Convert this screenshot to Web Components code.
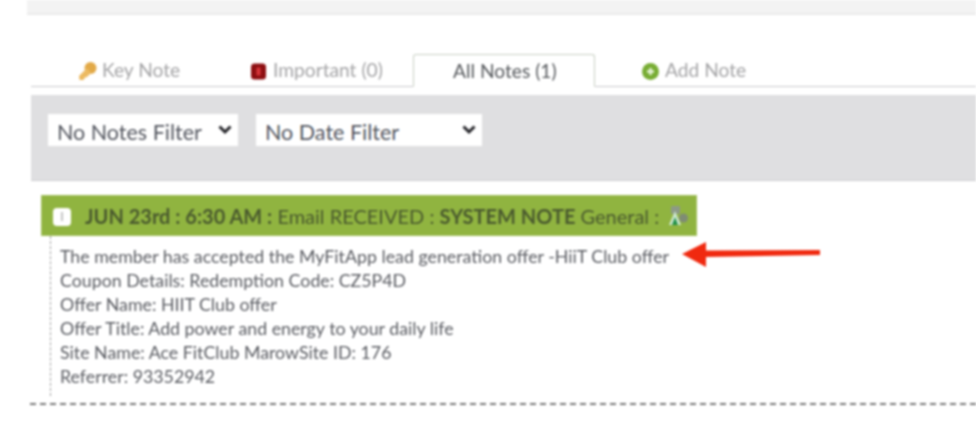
<!DOCTYPE html>
<html>
<head>
<meta charset="utf-8">
<style>
  html, body { margin: 0; padding: 0; background: #fff; height: 448px; overflow: hidden; }
  body { font-family: Lato, "Open Sans", sans-serif; }
</style>
</head>
<body>
<notes-page>
  <note-tabs></note-tabs>
  <note-filters></note-filters>
  <note-entry>
    <div>The member has accepted the MyFitApp lead generation offer -HiiT Club offer</div>
    <div>Coupon Details: Redemption Code: CZ5P4D</div>
    <div>Offer Name: HIIT Club offer</div>
    <div>Offer Title: Add power and energy to your daily life</div>
    <div>Site Name: Ace FitClub MarowSite ID: 176</div>
    <div>Referrer: 93352942</div>
  </note-entry>
</notes-page>

<script>
class NotesPage extends HTMLElement {
  connectedCallback() {
    const root = this.attachShadow({ mode: "open" });
    root.innerHTML = `
      <style>
        :host {
          display: block;
          position: relative;
          height: 448px;
          filter: blur(0.8px);
        }
        .top {
          height: 13px;
          margin-left: 27px;
          background: #f3f3f3;
          border-bottom: 2px solid #ebebeb;
        }
        .main {
          padding: 39px 0 0 31px;
        }
        .dash {
          margin-top: 7px;
          border-top: 2px dashed #777;
          margin-left: -1px;
        }
        .arrow {
          position: absolute;
          left: 681px;
          top: 240px;
        }
      </style>
      <div class="top"></div>
      <div class="main">
        <slot></slot>
        <div class="dash"></div>
      </div>
      <svg class="arrow" width="140" height="28" viewBox="0 0 140 28">
        <path d="M1 14 L25 2 L25 10.500 L139 10 L139 15 L25 17 L25 27 Z" fill="#f0290f"/>
      </svg>
    `;
  }
}

class NoteTabs extends HTMLElement {
  connectedCallback() {
    const root = this.attachShadow({ mode: "open" });
    root.innerHTML = `
      <style>
        :host {
          display: flex;
          align-items: flex-end;
          height: 32px;
          border-bottom: 1px solid #c9c9cc;
          margin-bottom: 8px;
          font-size: 19.200px;
          color: #a4a4a6;
        }
        .tab {
          display: flex;
          align-items: center;
          height: 32px;
          padding-bottom: 2px;
          box-sizing: border-box;
        }
        .key { margin-left: 47px; width: 173px; gap: 5px; }
        .imp { width: 162px; gap: 7px; }
        .all {
          width: 182px;
          height: 33px;
          margin-bottom: -1px;
          padding: 0 0 0 39px;
          background: #fff;
          border: 1px solid #c9d0c4;
          border-bottom: 1px solid #fff;
          border-radius: 3px 3px 0 0;
          color: #55585c;
        }
        .add { margin-left: 47px; gap: 6px; }
        svg { flex: none; margin-top: 4px; }
      </style>
      <div class="tab key">
        <svg width="19" height="20" viewBox="0 0 19 20">
          <circle cx="12.500" cy="7" r="6" fill="#e2a947"/>
          <path d="M9 7 L1 15 L1.500 19 L5.500 19 L7 16.500 L9 16 L13 12 Z" fill="#ecba62"/>
        </svg>
        <span>Key Note</span>
      </div>
      <div class="tab imp">
        <svg width="15" height="17" viewBox="0 0 15 17">
          <rect x="0" y="0.500" width="15" height="16" rx="3.500" fill="#8e0f12"/>
          <rect x="5.500" y="4.500" width="4" height="8" rx="1" fill="#d8373a"/>
        </svg>
        <span>Important (0)</span>
      </div>
      <div class="tab all"><span>All Notes (1)</span></div>
      <div class="tab add">
        <svg width="17" height="17" viewBox="0 0 17 17">
          <circle cx="8.500" cy="8.500" r="8.500" fill="#78ad34"/>
          <path d="M8.500 5 V12 M5 8.500 H12" stroke="#e6f3d5" stroke-width="2.400"/>
        </svg>
        <span>Add Note</span>
      </div>
    `;
  }
}

class NoteFilters extends HTMLElement {
  connectedCallback() {
    const root = this.attachShadow({ mode: "open" });
    const chevron = `<svg width="14" height="10" viewBox="0 0 14 10"><path d="M1.500 1.500 L7 7 L12.500 1.500" fill="none" stroke="#26262b" stroke-width="3"/></svg>`;
    root.innerHTML = `
      <style>
        :host {
          display: flex;
          align-items: flex-start;
          gap: 18px;
          height: 86px;
          padding: 19px 0 0 17px;
          box-sizing: border-box;
          background: #dfdfe1;
          border-bottom: 1px solid #cfcfd1;
          margin-bottom: 14px;
        }
        .select {
          display: flex;
          align-items: center;
          justify-content: space-between;
          height: 32px;
          box-sizing: border-box;
          padding: 0 6px 0 9px;
          background: #fff;
          font-size: 21.500px;
          color: #53565f;
        }
        .select span { padding-top: 3px; }
        .notes { width: 190px; }
        .dates { width: 226px; }
      </style>
      <div class="select notes"><span>No Notes Filter</span>${chevron}</div>
      <div class="select dates"><span>No Date Filter</span>${chevron}</div>
    `;
  }
}

class NoteEntry extends HTMLElement {
  connectedCallback() {
    const root = this.attachShadow({ mode: "open" });
    root.innerHTML = `
      <style>
        :host {
          display: block;
          margin-left: 10px;
        }
        .head {
          display: flex;
          align-items: center;
          width: 656px;
          height: 41px;
          box-sizing: border-box;
          padding-left: 11px;
          background: #90b440;
          border: 1px solid #a3c05f;
          font-size: 20px;
          color: #4a5a2e;
          white-space: pre;
        }
        .flag {
          display: flex;
          align-items: center;
          justify-content: center;
          width: 18px;
          height: 18px;
          margin: 2px 14px 0 0;
          border-radius: 4px;
          background: #fff;
        }
        .flag i { display: block; width: 2px; height: 9px; background: #c4c4c4; }
        b { font-weight: 700; color: #4a5a2e; }
        .who { margin-left: 3px; }
        .body {
          margin-left: 9px;
          padding: 8px 0 8px 9px;
          border-left: 1px dashed #a0a0a0;
          font-size: 17.800px;
          line-height: 24px;
          color: #5a5c62;
        }
      </style>
      <div class="head">
        <span class="flag"><i></i></span><span><b>JUN 23rd : 6:30 AM :</b> Email RECEIVED : <b>SYSTEM NOTE</b> General : </span>
        <svg class="who" width="22" height="22" viewBox="0 0 22 22">
          <rect x="4" y="1" width="9" height="8" rx="1" fill="#8d9a86"/>
          <circle cx="16.500" cy="13" r="4.500" fill="#7f8c74"/>
          <path d="M8 6 L2 20 L6 20 L8 14 L10 20 L14 20 Z" fill="#cfe8d4"/>
          <path d="M5 20 L8 12 L11 20 Z" fill="#1f8f45"/>
        </svg>
      </div>
      <div class="body"><slot></slot></div>
    `;
  }
}

customElements.define("notes-page", NotesPage);
customElements.define("note-tabs", NoteTabs);
customElements.define("note-filters", NoteFilters);
customElements.define("note-entry", NoteEntry);
</script>
</body>
</html>
